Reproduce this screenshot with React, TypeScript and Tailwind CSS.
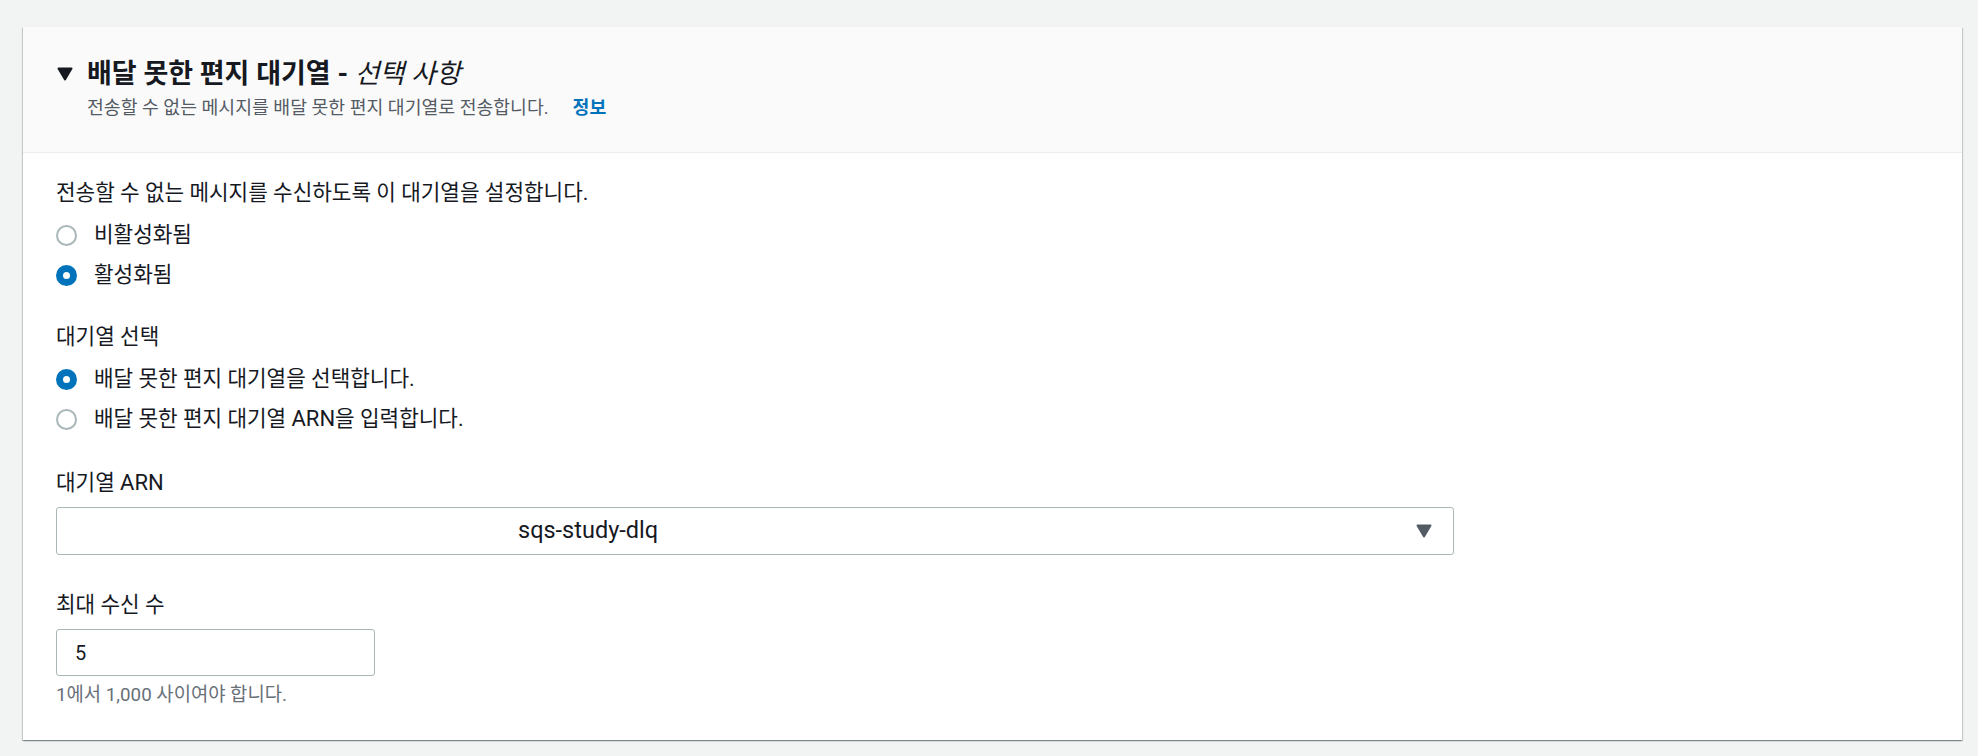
import React from 'react';

function Caret({ className }: { className: string }): React.ReactElement {
  return (
    <svg viewBox="0 0 16 14" className={className} aria-hidden="true">
      <path d="M1.5 1.5 L14.5 1.5 L8 12.5 Z" fill="currentColor" stroke="currentColor" strokeWidth="2" strokeLinejoin="round" />
    </svg>
  );
}

function Radio({ checked, children }: { checked?: boolean; children: React.ReactNode }): React.ReactElement {
  return (
    <label className="flex items-center gap-[17px] h-[40px]">
      <span
        className={
          checked
            ? 'w-[21px] h-[21px] rounded-full border-[7px] border-[#0073bb] bg-white flex-shrink-0'
            : 'w-[21px] h-[21px] rounded-full border-2 border-[#aab7b8] bg-white flex-shrink-0'
        }
      />
      <span className="text-[21.3px] leading-[28px] text-[#16191f]">{children}</span>
    </label>
  );
}

export default function App(): React.ReactElement {
  return (
    <div className="min-h-screen bg-[#f2f3f3] pt-[27px] pl-[23px] pb-[16px] font-['Roboto','Noto_Sans_CJK_KR',sans-serif]">
      <section className="w-[1939px] h-[713px] bg-white shadow-[0_1px_1px_0_rgba(0,28,36,0.3),1px_1px_1px_0_rgba(0,28,36,0.15),-1px_1px_1px_0_rgba(0,28,36,0.15)]">
        {/* Header */}
        <header className="h-[126px] bg-[#fafafa] border-b border-[#eaeded] pl-[34px] pt-[30px]">
          <div className="flex items-center gap-[14px] h-[34px]">
            <Caret className="w-[16px] h-[14px] text-[#16191f]" />
            <h2 className="text-[27px] leading-[34px] font-bold text-[#16191f]">
              배달 못한 편지 대기열 - <i className="font-normal">선택 사항</i>
            </h2>
          </div>
          <p className="ml-[30px] mt-[4px] text-[18.3px] leading-[26px] text-[#545b64]">
            전송할 수 없는 메시지를 배달 못한 편지 대기열로 전송합니다.
            <a className="ml-[24px] font-bold text-[#0073bb]">정보</a>
          </p>
        </header>

        {/* Body */}
        <div className="pl-[33px] pt-[26px] text-[#16191f]">
          <p className="text-[21.3px] leading-[28px]">전송할 수 없는 메시지를 수신하도록 이 대기열을 설정합니다.</p>
          <div className="mt-[8px]">
            <Radio>비활성화됨</Radio>
            <Radio checked>활성화됨</Radio>
          </div>

          <p className="mt-[28px] text-[21.3px] leading-[28px]">대기열 선택</p>
          <div className="mt-[8px]">
            <Radio checked>배달 못한 편지 대기열을 선택합니다.</Radio>
            <Radio>
              배달 못한 편지 대기열 <span className="text-[22px]">ARN</span>을 입력합니다.
            </Radio>
          </div>

          <p className="mt-[30px] text-[21.3px] leading-[28px]">
            대기열 <span className="text-[22px]">ARN</span>
          </p>
          <div className="mt-[10px] w-[1398px] h-[48px] border border-[#aab7b8] rounded-[3px] flex items-center pl-[461px] pr-[21px]">
            <span className="flex-1 text-[23.5px] text-[#16191f]">sqs-study-dlq</span>
            <Caret className="w-[16px] h-[14px] text-[#545b64]" />
          </div>

          <p className="mt-[36px] text-[21.3px] leading-[28px]">최대 수신 수</p>
          <div className="mt-[10px] w-[319px] h-[47px] border border-[#aab7b8] rounded-[3px] flex items-center pl-[18px]">
            <span className="text-[20px]">5</span>
          </div>
          <p className="mt-[7px] text-[18.8px] leading-[24px] text-[#687078]">1에서 1,000 사이여야 합니다.</p>
        </div>
      </section>
    </div>
  );
}
